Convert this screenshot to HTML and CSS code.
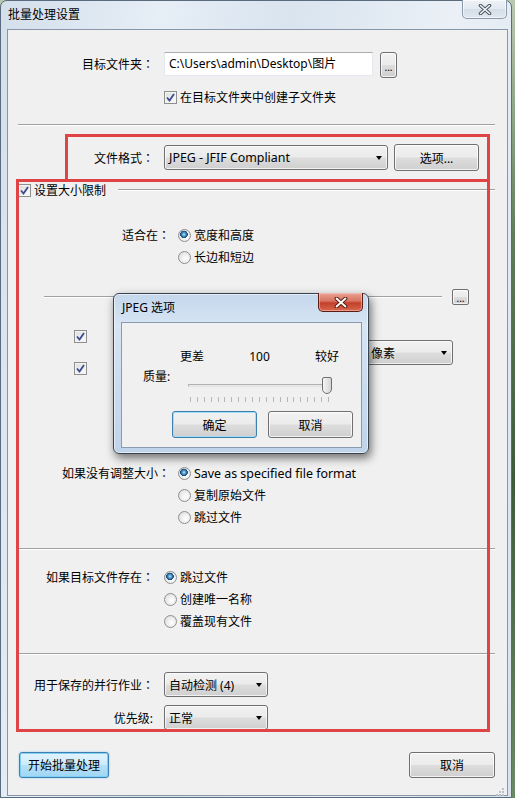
FILE: index.html
```html
<!DOCTYPE html>
<html>
<head>
<meta charset="utf-8">
<link rel="stylesheet" href="styles.css">
</head>
<body>
<div class="window">
  <div class="titlebar">
    <span class="title">批量处理设置</span>
  </div>
  <div class="win-close">
    <svg width="14" height="11" viewBox="0 0 14 11"><path d="M2.5 1.5 L11.5 9.5 M11.5 1.5 L2.5 9.5" stroke="#4a5460" stroke-width="3.6" stroke-linecap="round"/><path d="M2.5 1.5 L11.5 9.5 M11.5 1.5 L2.5 9.5" stroke="#f4f6f8" stroke-width="1.6" stroke-linecap="round"/></svg>
  </div>

  <div class="client">
    <div class="row r-folder">
      <span class="lbl">目标文件夹<span class="colon">：</span></span>
      <div class="input">C:\Users\admin\Desktop\图片</div>
      <div class="btn btn-dots">...</div>
    </div>
    <div class="row r-sub">
      <span class="cb"><svg width="11" height="11" viewBox="0 0 11 11"><path d="M2 5.5 L4.5 8.5 L9 2" fill="none" stroke="#3b4a8f" stroke-width="1.8"/></svg></span>
      <span class="txt">在目标文件夹中创建子文件夹</span>
    </div>
    <div class="sep"></div>

    <div class="row r-format">
      <span class="lbl">文件格式<span class="colon">：</span></span>
      <div class="combo combo-format"><span class="latin">JPEG - JFIF Compliant</span><i class="arrow"></i></div>
      <div class="btn btn-options">选项...</div>
    </div>

    <div class="group-head">
      <span class="cb"><svg width="11" height="11" viewBox="0 0 11 11"><path d="M2 5.5 L4.5 8.5 L9 2" fill="none" stroke="#3b4a8f" stroke-width="1.8"/></svg></span>
      <span class="txt">设置大小限制</span>
      <div class="etched group-line"></div>
    </div>

    <div class="row opt r-fit1">
      <span class="lbl lbl-wide">适合在<span class="colon">：</span></span>
      <span class="radio checked"></span><span class="txt">宽度和高度</span>
    </div>
    <div class="row opt indent-wide">
      <span class="radio"></span><span class="txt">长边和短边</span>
    </div>

    <div class="row r-line">
      <div class="etched inner-line"></div>
      <div class="btn btn-mini">...</div>
    </div>

    <div class="row r-dims">
      <div class="cb-col">
        <span class="cb"><svg width="11" height="11" viewBox="0 0 11 11"><path d="M2 5.5 L4.5 8.5 L9 2" fill="none" stroke="#3b4a8f" stroke-width="1.8"/></svg></span>
        <span class="cb"><svg width="11" height="11" viewBox="0 0 11 11"><path d="M2 5.5 L4.5 8.5 L9 2" fill="none" stroke="#3b4a8f" stroke-width="1.8"/></svg></span>
      </div>
      <div class="combo combo-unit"><span>像素</span><i class="arrow"></i></div>
    </div>

    <div class="row opt r-noresize">
      <span class="lbl lbl-wide">如果没有调整大小<span class="colon">：</span></span>
      <span class="radio checked"></span><span class="txt latin">Save as specified file format</span>
    </div>
    <div class="row opt indent-wide">
      <span class="radio"></span><span class="txt">复制原始文件</span>
    </div>
    <div class="row opt indent-wide">
      <span class="radio"></span><span class="txt">跳过文件</span>
    </div>

    <div class="sep sep2"></div>

    <div class="row opt r-exists">
      <span class="lbl">如果目标文件存在<span class="colon">：</span></span>
      <span class="radio checked"></span><span class="txt">跳过文件</span>
    </div>
    <div class="row opt indent">
      <span class="radio"></span><span class="txt">创建唯一名称</span>
    </div>
    <div class="row opt indent">
      <span class="radio"></span><span class="txt">覆盖现有文件</span>
    </div>

    <div class="sep sep3"></div>

    <div class="row r-jobs">
      <span class="lbl">用于保存的并行作业<span class="colon">：</span></span>
      <div class="combo combo-small"><span>自动检测 (4)</span><i class="arrow"></i></div>
    </div>
    <div class="row r-prio">
      <span class="lbl lbl-ascii">优先级:</span>
      <div class="combo combo-small"><span>正常</span><i class="arrow"></i></div>
    </div>

    <div class="row r-buttons">
      <div class="btn btn-start">开始批量处理</div>
      <div class="btn btn-cancel">取消</div>
    </div>
  </div>

  <div class="grip">
    <svg width="9" height="9" viewBox="0 0 9 9">
      <rect x="6" y="0" width="2" height="2" fill="#b9c2cc"/>
      <rect x="3" y="3" width="2" height="2" fill="#b9c2cc"/><rect x="6" y="3" width="2" height="2" fill="#b9c2cc"/>
      <rect x="0" y="6" width="2" height="2" fill="#b9c2cc"/><rect x="3" y="6" width="2" height="2" fill="#b9c2cc"/><rect x="6" y="6" width="2" height="2" fill="#b9c2cc"/>
    </svg>
  </div>

  <div class="mark mark-format"></div>
  <div class="mark mark-size"></div>

  <div class="dialog">
    <div class="dlg-title">JPEG 选项</div>
    <div class="dlg-close">
      <svg width="14" height="11" viewBox="0 0 14 11"><path d="M2.5 1.5 L11.5 9.5 M11.5 1.5 L2.5 9.5" stroke="#5a1c14" stroke-width="3.8" stroke-linecap="round"/><path d="M2.5 1.5 L11.5 9.5 M11.5 1.5 L2.5 9.5" stroke="#ffffff" stroke-width="1.8" stroke-linecap="round"/></svg>
    </div>
    <div class="dlg-client">
      <div class="dlg-scale"><span>更差</span><span>100</span><span>较好</span></div>
      <div class="dlg-quality">
        <span class="dlg-qlabel">质量:</span>
        <div class="slider">
          <div class="track"></div>
          <div class="ticks"></div>
          <div class="thumb"></div>
        </div>
      </div>
      <div class="dlg-buttons">
        <div class="btn btn-ok">确定</div>
        <div class="btn btn-dcancel">取消</div>
      </div>
    </div>
  </div>
</div>
</body>
</html>
```
FILE: styles.css
```css
* { box-sizing: border-box; }
html, body { margin: 0; padding: 0; }
body {
  width: 515px; height: 798px; overflow: hidden;
  background: linear-gradient(180deg, #b9c9b0 0%, #5f7d58 30%, #3f5a3a 60%, #6d8a66 100%);
  font-family: "Noto Sans", "Noto Sans CJK SC", sans-serif;
  font-size: 12px; color: #000;
}
.latin { font-size: 12.4px; }
.colon { font-family: "Noto Sans CJK TC", sans-serif; }
.window {
  position: relative;
  width: 512px; height: 798px;
  border: 1px solid #5a6b7d;
  border-radius: 7px 7px 0 0;
  background: linear-gradient(100deg, #d3dfeb 0%, #e6eef6 25%, #d9e4ef 45%, #eaf0f6 70%, #d8e3ee 100%);
  display: flex; flex-direction: column;
}
.titlebar { height: 28px; padding-left: 7px; display: flex; align-items: center; }
.title { font-size: 12px; line-height: 16px; }

.win-close {
  position: absolute; left: 461px; top: -1px; width: 45px; height: 19px;
  border: 1px solid #8a99ab; border-top: none;
  border-radius: 0 0 5px 5px;
  background: linear-gradient(180deg, #eef2f6 0%, #e2e9f0 50%, #d5dee8 51%, #dfe7ef 100%);
  box-shadow: inset 0 0 0 1px rgba(255,255,255,.6);
  display: flex; align-items: center; justify-content: center;
}

.client {
  margin: 0 3px 1px 6px;
  height: 767px;
  border: 1px solid #8796a8;
  background: #f0f0f0;
  display: flex; flex-direction: column;
}
.row { display: flex; align-items: center; flex-shrink: 0; }
.lbl { width: 146px; text-align: right; flex-shrink: 0; white-space: nowrap; }
.lbl-wide { width: 162px; }
.lbl-ascii { padding-right: 1px; }
.txt { white-space: nowrap; }

.r-folder { margin-top: 22px; height: 26px; align-items: flex-start; }
.r-folder .lbl { line-height: 24px; }
.input {
  margin-left: 10px; width: 209px; height: 24px;
  background: #fff;
  border: 1px solid #e3e9ef; border-top-color: #abadb3;
  padding-left: 4px; line-height: 22px; white-space: nowrap;
}
.r-sub { margin-top: 10px; height: 18px; padding-left: 156px; }
.r-sub .txt { margin-left: 3px; }

.sep {
  height: 2px; flex-shrink: 0;
  border-top: 1px solid #a0a0a0; border-bottom: 1px solid #ffffff;
  margin: 18px 12px 0 10px;
}
.etched { height: 2px; border-top: 1px solid #a0a0a0; border-bottom: 1px solid #ffffff; }

.r-format { margin-top: 18px; height: 27px; }
.r-format .lbl { line-height: 27px; }

.btn {
  display: flex; align-items: center; justify-content: center;
  border: 1px solid #707070; border-radius: 3px;
  background: linear-gradient(180deg, #f2f2f2 0%, #ebebeb 48%, #dddddd 52%, #cfcfcf 100%);
  box-shadow: inset 0 0 0 1px rgba(255,255,255,.75);
  white-space: nowrap; flex-shrink: 0;
}
.btn-dots { margin-left: 7px; width: 17px; height: 26px; font-size: 10px; line-height: 1; padding-top: 3px; }
.btn-options { margin-left: 6px; width: 85px; height: 27px; }
.btn-mini { margin-left: 10px; width: 17px; height: 16px; font-size: 10px; padding-top: 1px; border-radius: 2px; }

.combo {
  display: flex; align-items: center; justify-content: space-between;
  height: 25px; padding: 0 5px 0 4px;
  border: 1px solid #707070; border-radius: 3px;
  background: linear-gradient(180deg, #f2f2f2 0%, #ebebeb 48%, #dddddd 52%, #cfcfcf 100%);
  box-shadow: inset 0 0 0 1px rgba(255,255,255,.7);
  white-space: nowrap; flex-shrink: 0;
}
.arrow {
  width: 0; height: 0;
  border-left: 3.5px solid transparent; border-right: 3.5px solid transparent;
  border-top: 4px solid #000;
}
.combo-format { margin-left: 10px; width: 224px; }
.combo-unit { margin-left: 277px; width: 89px; padding-left: 6px; }
.combo-small { margin-left: 10px; width: 104px; }

.group-head { display: flex; align-items: center; height: 18px; margin-top: 10px; padding-left: 10px; flex-shrink: 0; }
.group-head .txt { margin-left: 3px; }
.group-line { flex: 1; margin: 0 12px 0 12px; }

.cb {
  width: 13px; height: 13px; flex-shrink: 0;
  border: 1px solid #8e8f8f;
  background: linear-gradient(135deg, #dcdcdc 0%, #f0f0f0 60%, #fbfbfb 100%);
  box-shadow: inset 0 0 0 1px #f4f4f4;
  display: flex; align-items: center; justify-content: center;
}
.cb svg { display: block; }

.radio {
  width: 13px; height: 13px; border-radius: 50%; flex-shrink: 0;
  border: 1px solid #8e8f8f;
  background: radial-gradient(circle at 60% 60%, #ffffff 0%, #eeeeee 45%, #d6d6d6 100%);
  margin-left: 8px; margin-right: 3px;
}
.radio.checked {
  background:
    radial-gradient(circle at 45% 40%, #bfe6fa 0px, #5ea9d8 1.4px, #245d92 3px, #1b4472 3.6px, rgba(0,0,0,0) 4px),
    radial-gradient(circle at 60% 60%, #ffffff 0%, #eeeeee 45%, #d6d6d6 100%);
}
.r-exists .radio, .indent .radio { margin-left: 10px; }

.opt { height: 22px; }
.r-fit1 { margin-top: 25px; }
.indent-wide { padding-left: 162px; }
.indent { padding-left: 146px; }

.r-line { margin-top: 21px; height: 16px; }
.inner-line { margin-left: 36px; width: 398px; }

.r-dims { margin-top: 25px; height: 45px; }
.cb-col { display: flex; flex-direction: column; gap: 19px; margin-left: 66px; }

.r-noresize { margin-top: 87px; }

.sep2 { margin-top: 20px; }
.r-exists { margin-top: 16px; }
.sep3 { margin-top: 21px; }

.r-jobs { margin-top: 17px; height: 25px; }
.r-prio { margin-top: 8px; height: 25px; }

.r-buttons { margin-top: 22px; justify-content: space-between; padding: 0 12px 0 11px; }
.btn-start {
  width: 90px; height: 26px;
  border-color: #3c7fb1;
  background: linear-gradient(180deg, #e3f4fd 0%, #cdebfb 48%, #b4e0f8 52%, #9fd6f4 100%);
  box-shadow: inset 0 0 0 1px #7fd0f5, 0 0 2px rgba(60,160,230,.5);
}
.btn-cancel { width: 86px; height: 26px; }

.grip { position: absolute; right: 6px; bottom: 4px; width: 9px; height: 9px; }

.mark { position: absolute; border: 3px solid #e04444; }
.mark-format { left: 64px; top: 133px; width: 425px; height: 48px; }
.mark-size { left: 15px; top: 178px; width: 474px; height: 553px; }

.dialog {
  position: absolute; left: 112px; top: 292px;
  width: 256px; height: 161px;
  border: 1px solid #39444f;
  border-radius: 6px;
  background: linear-gradient(180deg, #c5d7ec 0%, #d7e5f4 20%, #c9dbef 60%, #bfd3ea 100%);
  box-shadow: 2px 4px 10px rgba(0,0,0,.55), inset 0 0 0 1px rgba(255,255,255,.55);
  padding: 0 6px 5px 7px;
  display: flex; flex-direction: column;
}
.dlg-title { height: 28px; padding-left: 1px; line-height: 28px; flex-shrink: 0; }
.dlg-close {
  position: absolute; left: 204px; top: -1px; width: 45px; height: 19px;
  border: 1px solid #5c1d16; border-top: none;
  border-radius: 0 0 5px 5px;
  background: linear-gradient(180deg, #e8a395 0%, #d8735f 45%, #c4402b 55%, #d6674d 100%);
  box-shadow: inset 0 0 0 1px rgba(255,210,200,.5);
  display: flex; align-items: center; justify-content: center;
}
.dlg-client {
  flex: 1;
  border: 1px solid #8a9bb0;
  background: #f0f0f0;
  display: flex; flex-direction: column;
}
.dlg-scale { display: flex; justify-content: space-between; width: 159px; margin: 26px 0 0 58px; height: 16px; line-height: 16px; }
.dlg-quality { display: flex; margin-top: 5px; height: 33px; }
.dlg-qlabel { margin-left: 21px; width: 43px; line-height: 14px; height: 14px; flex-shrink: 0; }
.slider { position: relative; width: 148px; height: 33px; }
.track {
  position: absolute; left: 2px; top: 14px; width: 139px; height: 3px;
  border: 1px solid #b0b0b0; border-bottom-color: #e4e4e4;
  background: #e7eaea;
}
.ticks {
  position: absolute; left: 4px; top: 27px; width: 139px; height: 5px;
  background: repeating-linear-gradient(90deg, #b5b5b5 0px, #b5b5b5 1px, transparent 1px, transparent 6.9px);
}
.thumb {
  position: absolute; left: 136px; top: 7px; width: 10px; height: 17px;
  border: 1px solid #707070;
  border-radius: 2px 2px 5px 5px;
  background: linear-gradient(90deg, #f4f4f4 0%, #e6e6e6 50%, #d4d4d4 100%);
}
.dlg-buttons { display: flex; gap: 11px; margin: 8px 0 0 50px; }
.btn-ok, .btn-dcancel { width: 85px; height: 27px; }
.btn-ok { border-color: #3c7fb1; box-shadow: inset 0 0 0 1px #a6dcf5; }
```
